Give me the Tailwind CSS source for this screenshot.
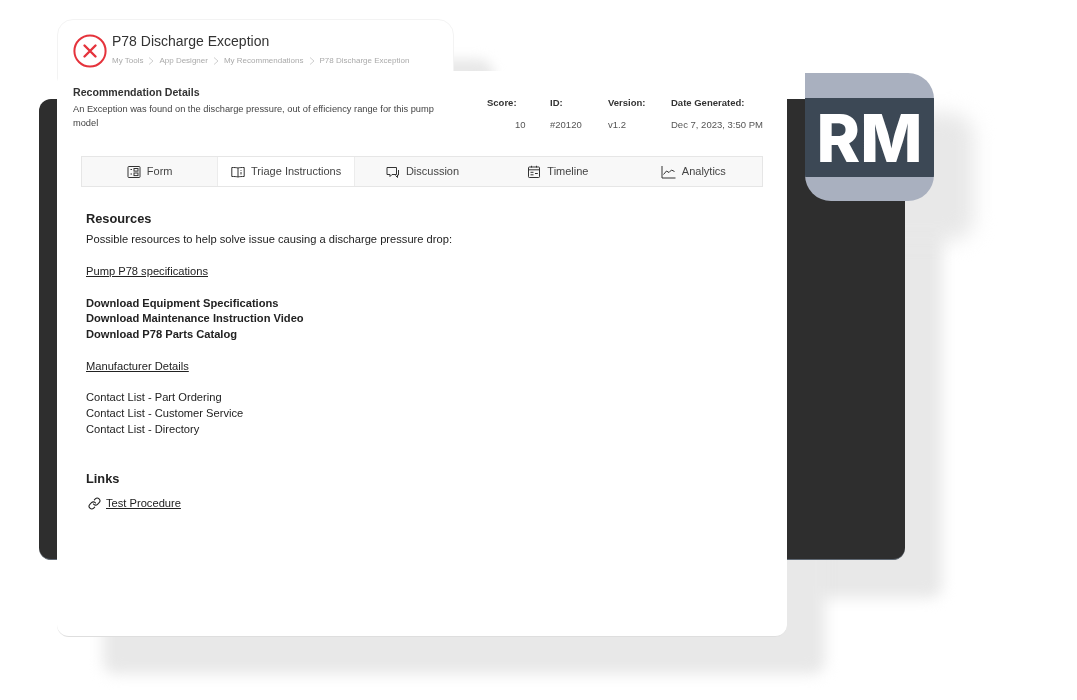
<!DOCTYPE html>
<html>
<head>
<meta charset="utf-8">
<script src="https://cdn.jsdelivr.net/npm/@tailwindcss/browser@4"></script>
</head>
<body class="bg-white font-['Liberation_Sans',Arial,sans-serif] text-[#222]">
<div class="relative w-[1077px] h-[700px] overflow-hidden bg-white">
  <!-- shadows -->
  <div class="absolute left-[97px] top-[59px] w-[397px] h-[100px] rounded-2xl bg-[#e8e8e8] blur-[6px]"></div>
  <div class="absolute left-[79px] top-[139px] w-[863px] h-[459px] rounded-xl bg-[#e8e8e8] blur-[7px]"></div>
  <div class="absolute left-[103px] top-[111px] w-[722px] h-[563px] rounded-xl bg-[#e8e8e8] blur-[7px]"></div>
  <div class="absolute left-[848px] top-[113px] w-[126px] h-[128px] rounded-3xl bg-[#e8e8e8] blur-[10px]"></div>

  <!-- dark panel -->
  <div class="absolute left-[39px] top-[99px] w-[866px] h-[461px] rounded-xl bg-[#2e2e2e] border-b border-[#5f6873]"></div>

  <!-- header card -->
  <div class="absolute left-[57px] top-[19px] w-[397px] h-[90px] rounded-t-2xl bg-white border border-[#f3f3f3] flex items-start gap-[5px] pl-[15px] pt-[14px] blur-[0.3px]">
    <svg class="w-[34px] h-[34px] shrink-0" viewBox="0 0 34 34" fill="none" stroke="#e5333c">
      <circle cx="17" cy="17" r="15.600" stroke-width="2"/>
      <path d="M11.500 11.500 22.500 22.500M22.500 11.500 11.500 22.500" stroke-width="2.400" stroke-linecap="round"/>
    </svg>
    <div class="-mt-[1px]">
      <h1 class="text-[14px] leading-[16px] text-[#333] font-normal">P78 Discharge Exception</h1>
      <div class="flex items-center mt-[7px] text-[8px] leading-[10px] text-[#aaa]">
        <span>My Tools</span>
        <svg class="w-[16px] h-[8px]" viewBox="0 0 16 8" fill="none" stroke="#bbb" stroke-width=".7"><path d="M6 .5 10 4 6 7.500"/></svg>
        <span>App Designer</span>
        <svg class="w-[16px] h-[8px]" viewBox="0 0 16 8" fill="none" stroke="#bbb" stroke-width=".7"><path d="M6 .5 10 4 6 7.500"/></svg>
        <span>My Recommendations</span>
        <svg class="w-[16px] h-[8px]" viewBox="0 0 16 8" fill="none" stroke="#bbb" stroke-width=".7"><path d="M6 .5 10 4 6 7.500"/></svg>
        <span>P78 Discharge Exception</span>
      </div>
    </div>
  </div>

  <!-- main card -->
  <div class="absolute left-[57px] top-[71px] w-[730px] h-[566px] rounded-xl bg-white border-b border-[#dedede] pt-[15px] pl-[16px] pr-[24px] blur-[0.3px]">
    <div class="flex justify-between h-[44px]">
      <div class="w-[370px]">
        <h2 class="text-[10.600px] leading-[12px] font-bold text-[#333]">Recommendation Details</h2>
        <p class="mt-[4px] text-[9.280px] leading-[14px] text-[#444]">An Exception was found on the discharge pressure, out of efficiency range for this pump model</p>
      </div>
      <div class="grid grid-cols-[63px_58px_63px_92px] text-[9.500px] leading-[12px] pt-[11px] text-[#555]">
        <div class="font-bold text-[#333]">Score:</div>
        <div class="font-bold text-[#333]">ID:</div>
        <div class="font-bold text-[#333]">Version:</div>
        <div class="font-bold text-[#333]">Date Generated:</div>
        <div class="mt-[10px] pl-[28px]">10</div>
        <div class="mt-[10px]">#20120</div>
        <div class="mt-[10px]">v1.2</div>
        <div class="mt-[10px] whitespace-nowrap">Dec 7, 2023, 3:50 PM</div>
      </div>
    </div>

    <div class="mt-[26px] ml-[8px] w-[682px] h-[31px] flex border border-[#e6e6e6] bg-[#f8f8f8] pr-[1px] text-[11px] text-[#444]">
      <div class="flex-1 flex items-center justify-center gap-[6px]">
        <svg class="w-[14px] h-[14px]" viewBox="0 0 14 14" fill="none" stroke="#333" stroke-width="1"><rect x="1" y="1.500" width="12" height="11" rx=".8"/><path d="M3.500 4.500H5M3.500 9H5"/><rect x="7" y="3.500" width="4" height="2.600"/><rect x="7" y="8" width="4" height="2.600"/></svg>
        <span>Form</span>
      </div>
      <div class="flex-1 flex items-center justify-center gap-[6px] bg-white border-x border-[#ececec]">
        <svg class="w-[14px] h-[14px]" viewBox="0 0 14 14" fill="none" stroke="#333" stroke-width="1"><path d="M7 3C5.500 2.500 3 2.500 .8 2.500V11.500C3 11.500 5.500 11.500 7 12 8.500 11.500 11 11.500 13.200 11.500V2.500C11 2.500 8.500 2.500 7 3ZM7 3V12M10 5V5.800M10 7V9.500"/></svg>
        <span>Triage Instructions</span>
      </div>
      <div class="flex-1 flex items-center justify-center gap-[6px]">
        <svg class="w-[14px] h-[14px]" viewBox="0 0 14 14" fill="none" stroke="#333" stroke-width="1"><path d="M1 2.500H10.500V9.500H6L4 11.500V9.500H1Z" stroke-linejoin="round"/><path d="M12.500 5V10H11.500V12.500L9.500 10.500"/></svg>
        <span>Discussion</span>
      </div>
      <div class="flex-1 flex items-center justify-center gap-[6px]">
        <svg class="w-[14px] h-[14px]" viewBox="0 0 14 14" fill="none" stroke="#333" stroke-width="1"><rect x="1.500" y="2" width="11" height="10.500" rx=".8"/><path d="M1.500 4.800H12.500M4.500 .8V2.500M9.500 .8V2.500M3.500 7.300H6.500M3.500 9.800H6.500M8 8.500H10.800"/></svg>
        <span>Timeline</span>
      </div>
      <div class="flex-1 flex items-center justify-center gap-[6px]">
        <svg class="w-[15px] h-[14px]" viewBox="0 0 15 14" fill="none" stroke="#333" stroke-width="1"><path d="M1 1V13H14.500"/><path d="M2.500 9.500 5.500 6 8 7.500 10.500 5 13.500 6.500"/></svg>
        <span>Analytics</span>
      </div>
    </div>

    <div class="ml-[13px] mt-[24px] text-[11.150px] leading-[15.800px] text-[#222]">
      <h3 class="text-[12.800px] leading-[16px] font-bold">Resources</h3>
      <p class="mt-[5px]">Possible resources to help solve issue causing a discharge pressure drop:</p>
      <p class="mt-[16px] underline">Pump P78 specifications</p>
      <div class="mt-[16px] font-bold">
        <p>Download Equipment Specifications</p>
        <p>Download Maintenance Instruction Video</p>
        <p>Download P78 Parts Catalog</p>
      </div>
      <p class="mt-[15.700px] underline">Manufacturer Details</p>
      <div class="mt-[15.600px]">
        <p>Contact List - Part Ordering</p>
        <p>Contact List - Customer Service</p>
        <p>Contact List - Directory</p>
      </div>
      <h3 class="mt-[33.500px] text-[12.800px] leading-[16px] font-bold">Links</h3>
      <div class="mt-[9px] flex items-center gap-[5px] pl-[2px]">
        <svg class="w-[13px] h-[13px]" viewBox="0 0 24 24" fill="none" stroke="#222" stroke-width="2" stroke-linecap="round" stroke-linejoin="round"><path d="M10 13a5 5 0 0 0 7.540.540l3-3a5 5 0 0 0-7.070-7.070l-1.720 1.710"/><path d="M14 11a5 5 0 0 0-7.540-.540l-3 3a5 5 0 0 0 7.070 7.070l1.710-1.710"/></svg>
        <span class="underline">Test Procedure</span>
      </div>
    </div>
  </div>

  <!-- RM badge -->
  <div class="absolute left-[805px] top-[73px] w-[129px] h-[128px] rounded-tr-[26px] rounded-bl-[26px] rounded-br-[26px] bg-[#a9b0bf] flex items-center overflow-hidden">
    <div class="w-full h-[79px] mt-[1px] bg-[#3c4855] flex items-center justify-center">
      <span class="text-white font-['Inter',sans-serif] font-extrabold text-[66px] leading-none whitespace-nowrap">RM</span>
    </div>
  </div>
</div>
</body>
</html>
